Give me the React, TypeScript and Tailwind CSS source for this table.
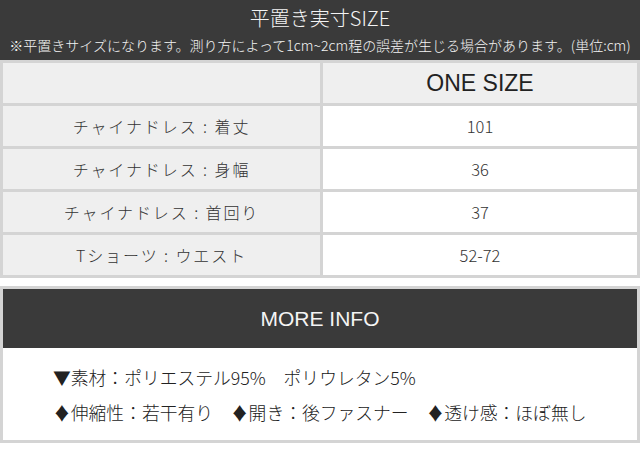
import React from "react";

const rows = [
  { label: "チャイナドレス : 着丈", value: "101" },
  { label: "チャイナドレス : 身幅", value: "36" },
  { label: "チャイナドレス : 首回り", value: "37" },
  { label: "Tショーツ : ウエスト", value: "52-72" },
];

export default function App() {
  return (
    <main className="w-[640px] h-[457px] bg-white overflow-hidden font-['Liberation_Sans','Noto_Sans_CJK_JP',sans-serif]">
      <header className="h-[60px] bg-[#3a3a3a] text-[#f4f4f4] font-['Noto_Sans_CJK_JP',sans-serif] font-light flex flex-col items-center">
        <h1 className="text-[20px] leading-[20px] mt-[8px]">平置き実寸SIZE</h1>
        <p className="text-[14px] leading-[14px] mt-[10px]">
          ※平置きサイズになります。測り方によって1cm~2cm程の誤差が生じる場合があります。(単位:cm)
        </p>
      </header>

      <div className="grid grid-cols-[317px_314px] gap-[3px] p-[3px] bg-[#d4d4d4] font-['Noto_Sans_CJK_JP',sans-serif] font-light text-[#333]">
        <div className="h-[40px] bg-[#efefef]" />
        <div className="h-[40px] bg-[#efefef] flex items-center justify-center font-['Liberation_Sans',sans-serif] font-normal text-[23px] text-[#222]">
          ONE SIZE
        </div>
        {rows.map((row) => (
          <React.Fragment key={row.label}>
            <div className="h-[40px] bg-[#efefef] flex items-center justify-center text-[16px] tracking-[0.12em]">
              {row.label}
            </div>
            <div className="h-[40px] bg-white flex items-center justify-center text-[16.5px]">
              {row.value}
            </div>
          </React.Fragment>
        ))}
      </div>

      <section className="mt-[8px] border-[3px] border-[#d4d4d4]">
        <div className="h-[59px] bg-[#3a3a3a] flex items-center justify-center text-[#f4f4f4] text-[21px]">
          MORE INFO
        </div>
        <div className="pt-[12px] pb-[10px] pl-[50px] font-['Noto_Sans_CJK_JP',sans-serif] font-light text-[17.8px] leading-[35px] text-[#222]">
          <p>▼素材：ポリエステル95%　ポリウレタン5%</p>
          <p>♦伸縮性：若干有り　♦開き：後ファスナー　♦透け感：ほぼ無し</p>
        </div>
      </section>
    </main>
  );
}
